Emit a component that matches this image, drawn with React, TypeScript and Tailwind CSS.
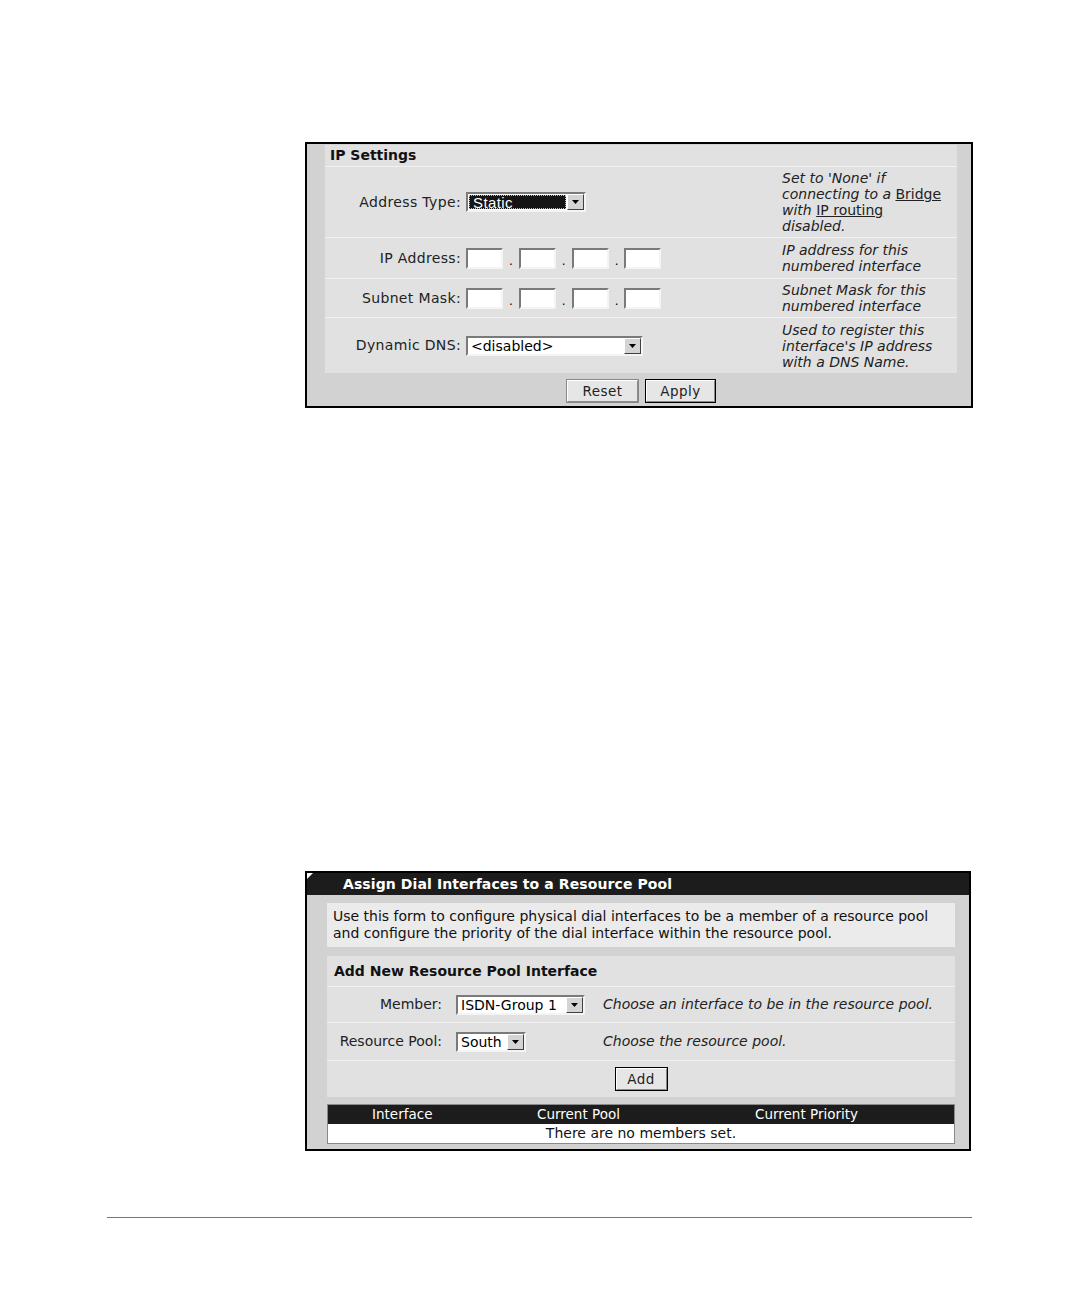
import React from 'react';

const font = { fontFamily: '"DejaVu Sans", Verdana, sans-serif' };

function Arrow() {
  return (
    <div className="flex h-full w-[17px] shrink-0 items-center justify-center border border-t-white border-l-white border-r-[#404040] border-b-[#404040] bg-[#d4d4d4]">
      <svg width="7" height="4" viewBox="0 0 7 4">
        <path d="M0 0h7L3.5 4z" fill="#000" />
      </svg>
    </div>
  );
}

function Select({ width, value, selected }: { width: string; value: string; selected?: boolean }) {
  return (
    <div className={`flex h-[20px] ${width} items-stretch border-2 border-t-[#7a7a7a] border-l-[#7a7a7a] border-r-[#f4f4f4] border-b-[#f4f4f4] bg-white`}>
      {selected ? (
        <div className="m-[1px] flex flex-1 items-center border border-dotted border-[#bbbbbb] bg-[#141414] pl-[3px] text-[15px] leading-none tracking-[0.4px] text-white" style={{ fontFamily: '"Liberation Sans", Arial, sans-serif' }}>
          {value}
        </div>
      ) : (
        <div className="flex flex-1 items-center pl-[3px] text-[14px] leading-none text-black">{value}</div>
      )}
      <Arrow />
    </div>
  );
}

function IpBox() {
  return <div className="h-[21px] w-[37px] border-2 border-t-[#7a7a7a] border-l-[#7a7a7a] border-r-[#f4f4f4] border-b-[#f4f4f4] bg-white" />;
}

function IpField() {
  return (
    <div className="flex items-end gap-[6px]">
      <IpBox />
      <span className="pb-[2px] text-[12px] leading-none">.</span>
      <IpBox />
      <span className="pb-[2px] text-[12px] leading-none">.</span>
      <IpBox />
      <span className="pb-[2px] text-[12px] leading-none">.</span>
      <IpBox />
    </div>
  );
}

function Button({ label, width, dark }: { label: string; width: string; dark?: boolean }) {
  return (
    <div className={`flex h-[24px] ${width} items-center justify-center border ${dark ? 'border-black' : 'border-[#888888]'} bg-[#e6e6e6] text-[13.5px] tracking-[0.5px] text-[#222]`}>
      <div className="flex h-full w-full items-center justify-center border border-t-white border-l-white border-r-[#8a8a8a] border-b-[#8a8a8a]">
        {label}
      </div>
    </div>
  );
}

function Row({ label, children, desc, h }: { label: string; children: React.ReactNode; desc: React.ReactNode; h: string }) {
  return (
    <div className={`flex ${h} items-center border-t border-[#f0f0f0]`}>
      <div className="w-[141px] shrink-0 pr-[5px] text-right text-[14px] tracking-[0.35px] text-[#222]">{label}</div>
      <div className="w-[316px] shrink-0">{children}</div>
      <div className="text-[14px] italic leading-[16px] text-[#222]">{desc}</div>
    </div>
  );
}

export default function App() {
  return (
    <div className="relative h-[1296px] w-[1080px] bg-white text-black" style={font}>
      <div className="pt-[142px] pl-[305px]">
        {/* IP Settings */}
        <div className="h-[266px] w-[668px] border-2 border-black bg-[#d2d2d2] pt-[1px] pl-[18px] pr-[14px]">
          <div className="bg-[#e1e1e1]">
            <div className="flex h-[21px] items-center pl-[5px] text-[14px] font-bold text-[#111]">IP Settings</div>
            <Row
              label="Address Type:"
              h="h-[71px]"
              desc={
                <>
                  Set to 'None' if
                  <br />
                  connecting to a <span className="not-italic underline">Bridge</span>
                  <br />
                  with <span className="not-italic underline">IP routing</span>
                  <br />
                  disabled.
                </>
              }
            >
              <Select width="w-[120px]" value="Static" selected />
            </Row>
            <Row
              label="IP Address:"
              h="h-[41px]"
              desc={
                <>
                  IP address for this
                  <br />
                  numbered interface
                </>
              }
            >
              <IpField />
            </Row>
            <Row
              label="Subnet Mask:"
              h="h-[39px]"
              desc={
                <>
                  Subnet Mask for this
                  <br />
                  numbered interface
                </>
              }
            >
              <IpField />
            </Row>
            <Row
              label="Dynamic DNS:"
              h="h-[56px]"
              desc={
                <>
                  Used to register this
                  <br />
                  interface's IP address
                  <br />
                  with a DNS Name.
                </>
              }
            >
              <Select width="w-[177px]" value="<disabled>" />
            </Row>
          </div>
          <div className="flex justify-center gap-[6px] pt-[6px]">
            <Button label="Reset" width="w-[73px]" />
            <Button label="Apply" width="w-[71px]" dark />
          </div>
        </div>

        {/* Assign Dial Interfaces */}
        <div className="mt-[463px] h-[280px] w-[666px] border-2 border-black bg-[#d2d2d2]">
          <div className="relative flex h-[22px] items-center bg-[#1c1c1c] pl-[36px] text-[14px] font-bold tracking-[0.1px] text-white">
            <svg className="absolute top-0 left-0" width="6" height="6" viewBox="0 0 6 6">
              <path d="M0 0h6L0 6z" fill="#fff" />
            </svg>
            Assign Dial Interfaces to a Resource Pool
          </div>
          <div className="pt-[8px] pl-[20px] pr-[14px]">
            <div className="bg-[#ebebeb] px-[6px] py-[5px] text-[14px] leading-[17px] text-[#111]">
              Use this form to configure physical dial interfaces to be a member of a resource pool
              <br />
              and configure the priority of the dial interface within the resource pool.
            </div>
            <div className="mt-[9px] bg-[#e1e1e1]">
              <div className="flex h-[30px] items-center pl-[7px] text-[14px] font-bold text-[#111]">Add New Resource Pool Interface</div>
              <div className="flex h-[36px] items-center border-t border-[#f0f0f0]">
                <div className="w-[115px] shrink-0 text-right text-[14px] text-[#222]">Member:</div>
                <div className="w-[161px] shrink-0 pl-[14px]">
                  <Select width="w-[129px]" value="ISDN-Group 1" />
                </div>
                <div className="text-[14px] italic text-[#222]">Choose an interface to be in the resource pool.</div>
              </div>
              <div className="flex h-[38px] items-center border-t border-[#f0f0f0]">
                <div className="w-[115px] shrink-0 text-right text-[14px] text-[#222]">Resource Pool:</div>
                <div className="w-[161px] shrink-0 pl-[14px]">
                  <Select width="w-[70px]" value="South" />
                </div>
                <div className="text-[14px] italic text-[#222]">Choose the resource pool.</div>
              </div>
              <div className="flex h-[37px] items-center justify-center border-t border-[#f0f0f0]">
                <Button label="Add" width="w-[53px]" dark />
              </div>
            </div>
            <div className="mt-[7px] border border-[#8a8a8a] bg-white">
              <div className="flex h-[19px] items-center bg-[#1c1c1c] pl-[44px] text-[13.5px] text-white">
                <span className="w-[165px]">Interface</span>
                <span className="w-[218px]">Current Pool</span>
                <span>Current Priority</span>
              </div>
              <div className="flex h-[19px] items-center justify-center text-[14px] text-[#111]">There are no members set.</div>
            </div>
          </div>
        </div>
      </div>

      <div className="absolute top-[1217px] left-[107px] h-[1px] w-[865px] bg-[#777777]" />
    </div>
  );
}
